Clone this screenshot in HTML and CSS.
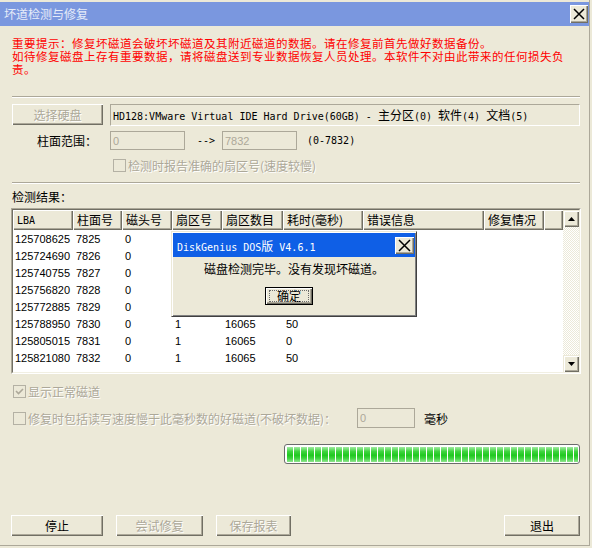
FILE: index.html
```html
<!DOCTYPE html>
<html lang="zh-CN">
<head>
<meta charset="utf-8">
<title>坏道检测与修复</title>
<link rel="stylesheet" href="styles.css">
</head>
<body>
<div class="window">
  <div class="titlebar">
    <span class="titlebar-text">坏道检测与修复</span>
    <span class="close-btn"><svg viewBox="0 0 18 18" width="18" height="18"><path d="M4 4 L14 14 M14 4 L4 14" stroke="#000" stroke-width="1.5"/></svg></span>
  </div>

  <div class="content">
    <p class="warning">重要提示：修复坏磁道会破坏坏磁道及其附近磁道的数据。请在修复前首先做好数据备份。<br>如待修复磁盘上存有重要数据，请将磁盘送到专业数据恢复人员处理。本软件不对由此带来的任何损失负责。</p>
    <div class="etched"></div>

    <div class="disk-row">
      <button class="btn btn-select" disabled>选择硬盘</button>
      <div class="disk-info mono">HD128:VMware Virtual IDE Hard Drive(60GB) - <span class="cjk">主分区</span>(0) <span class="cjk">软件</span>(4) <span class="cjk">文档</span>(5)</div>
    </div>

    <div class="range-row">
      <span class="range-label">柱面范围：</span>
      <input class="field" type="text" value="0" disabled>
      <span class="arrow mono">--&gt;</span>
      <input class="field" type="text" value="7832" disabled>
      <span class="range-hint mono">(0-7832)</span>
    </div>

    <div class="opt-row opt-exact">
      <span class="checkbox"></span>
      <span class="disabled-text">检测时报告准确的扇区号(速度较慢)</span>
    </div>

    <div class="etched sep2"></div>

    <div class="section-label">检测结果：</div>

    <div class="list">
      <div class="list-inner">
        <table class="grid">
          <colgroup>
            <col style="width:60px"><col style="width:49px"><col style="width:50px"><col style="width:50px"><col style="width:61px"><col style="width:80px"><col style="width:121px"><col style="width:60px"><col style="width:19px">
          </colgroup>
          <thead>
            <tr><th><span class="mono">LBA</span></th><th>柱面号</th><th>磁头号</th><th>扇区号</th><th>扇区数目</th><th>耗时(毫秒)</th><th>错误信息</th><th>修复情况</th><th></th></tr>
          </thead>
          <tbody>
            <tr><td class="lba">125708625</td><td>7825</td><td>0</td><td></td><td></td><td></td><td></td><td></td><td></td></tr>
            <tr><td class="lba">125724690</td><td>7826</td><td>0</td><td></td><td></td><td></td><td></td><td></td><td></td></tr>
            <tr><td class="lba">125740755</td><td>7827</td><td>0</td><td></td><td></td><td></td><td></td><td></td><td></td></tr>
            <tr><td class="lba">125756820</td><td>7828</td><td>0</td><td></td><td></td><td></td><td></td><td></td><td></td></tr>
            <tr><td class="lba">125772885</td><td>7829</td><td>0</td><td></td><td></td><td></td><td></td><td></td><td></td></tr>
            <tr><td class="lba">125788950</td><td>7830</td><td>0</td><td>1</td><td>16065</td><td>50</td><td></td><td></td><td></td></tr>
            <tr><td class="lba">125805015</td><td>7831</td><td>0</td><td>1</td><td>16065</td><td>0</td><td></td><td></td><td></td></tr>
            <tr><td class="lba">125821080</td><td>7832</td><td>0</td><td>1</td><td>16065</td><td>50</td><td></td><td></td><td></td></tr>
          </tbody>
        </table>
        <div class="scrollbar">
          <span class="sb-btn"><svg viewBox="0 0 7 4" width="7" height="4"><path d="M0 4 L3.5 0 L7 4 Z" fill="#000"/></svg></span>
          <span class="sb-track"></span>
          <span class="sb-btn"><svg viewBox="0 0 7 4" width="7" height="4"><path d="M0 0 L7 0 L3.5 4 Z" fill="#000"/></svg></span>
        </div>
      </div>
    </div>

    <div class="opt-row opt-normal">
      <span class="checkbox checked"><svg viewBox="0 0 11 11" width="11" height="11"><path d="M2 5 L4.5 7.5 L9 3" fill="none" stroke="#aca899" stroke-width="1.6"/></svg></span>
      <span class="disabled-text">显示正常磁道</span>
    </div>

    <div class="slow-row">
      <div class="opt-row opt-slow">
        <span class="checkbox"></span>
        <span class="disabled-text">修复时包括读写速度慢于此毫秒数的好磁道(不破坏数据)：</span>
      </div>
      <input class="field field-ms" type="text" value="0" disabled>
      <span class="unit">毫秒</span>
    </div>

    <div class="progress-row">
      <div class="progress"><div class="progress-fill"></div></div>
    </div>

    <div class="actions">
      <button class="btn btn-stop">停止</button>
      <button class="btn btn-try" disabled>尝试修复</button>
      <button class="btn btn-save" disabled>保存报表</button>
      <button class="btn btn-exit">退出</button>
    </div>
  </div>

  <div class="dialog">
    <div class="dlg-title">
      <span class="mono">DiskGenius DOS<span class="cjk">版</span> V4.6.1</span>
      <span class="dlg-close"><svg viewBox="0 0 19 17" width="19" height="17"><path d="M4 3 L15 14 M15 3 L4 14" stroke="#000" stroke-width="1.5"/></svg></span>
    </div>
    <div class="dlg-msg">磁盘检测完毕。没有发现坏磁道。</div>
    <div class="dlg-actions"><button class="btn dlg-ok">确定</button></div>
  </div>
</div>
</body>
</html>
```

FILE: styles.css
```css
* { box-sizing: border-box; }

html, body {
  margin: 0;
  padding: 0;
}

body {
  background: #ece9d8;
  font-family: "Noto Sans CJK SC", "Noto Sans", sans-serif;
  font-size: 12px;
  color: #000;
}

.mono {
  font-family: "DejaVu Sans Mono", "Noto Sans CJK SC", monospace;
  font-size: 10px;
}

.cjk {
  font-family: "Noto Sans CJK SC", sans-serif;
  font-size: 12px;
}

/* window frame */
.window {
  position: relative;
  width: 590px;
  height: 546px;
  padding-top: 2px;
  border-right: 1px solid #aca899;
  border-bottom: 1px solid #aca899;
}

.titlebar {
  display: flex;
  align-items: center;
  justify-content: space-between;
  height: 24px;
  padding: 0 1px 0 4px;
  background: #7a97df;
}

.titlebar-text {
  color: #e6ecf9;
  line-height: 24px;
}

.close-btn {
  display: flex;
  width: 18px;
  height: 18px;
  background: #ece9d8;
  box-shadow: inset 1px 1px #fff, inset -1px -1px #716f64, inset -2px -2px #aca899;
}

.content {
  padding: 0 9px 0 12px;
}

/* tightly spaced red notice; 11.5px glyphs + 0.5px tracking keep a 12px advance */
.warning {
  margin: 12px 0 0;
  width: 556px;
  height: 58px;
  color: #f00;
  font-family: "Liberation Sans", "Noto Sans CJK SC", sans-serif;
  font-size: 11.5px;
  letter-spacing: 0.5px;
  line-height: 13px;
}

.etched {
  height: 2px;
  border-top: 1px solid #aca899;
  border-bottom: 1px solid #fff;
}

.sep2 {
  margin-top: 10px;
}

/* push buttons */
.btn {
  height: 21px;
  padding: 0;
  border: none;
  background: #ece9d8;
  box-shadow: inset 1px 1px #fff, inset -1px -1px #716f64, inset -2px -2px #aca899;
  font: inherit;
  color: #000;
}

.btn:disabled {
  color: #aca899;
  text-shadow: 1px 1px #fff;
}

.disk-row {
  display: flex;
  align-items: flex-start;
  gap: 7px;
  margin-top: 6px;
}

.btn-select {
  width: 91px;
}

.disk-info {
  flex: 1;
  height: 22px;
  padding-left: 2px;
  line-height: 20px;
  white-space: nowrap;
  border-top: 1px solid #aca899;
  border-left: 1px solid #aca899;
  border-right: 1px solid #fff;
  border-bottom: 1px solid #fff;
}

.range-row {
  display: flex;
  align-items: center;
  height: 19px;
  margin-top: 5px;
}

.range-label {
  width: 73px;
  margin-left: 25px;
}

.field {
  width: 75px;
  height: 19px;
  margin: 0;
  padding: 0 2px;
  border: 1px solid #aca899;
  background: #ece9d8;
  color: #aca899;
  font: 11px "Liberation Sans", sans-serif;
}

.arrow {
  width: 25px;
  margin-left: 12px;
}

.range-hint {
  margin-left: 10px;
}

/* check boxes */
.opt-row {
  display: flex;
  align-items: center;
  height: 14px;
}

.opt-exact {
  margin: 8px 0 0 101px;
}

.checkbox {
  display: flex;
  align-items: center;
  justify-content: center;
  width: 13px;
  height: 13px;
  margin-right: 2px;
  border: 1px solid #b4b1a4;
}

.disabled-text {
  color: #aca899;
  text-shadow: 1px 1px #fff;
}

.section-label {
  margin-top: 5px;
  line-height: 16px;
}

/* result list */
.list {
  width: 570px;
  height: 166px;
  margin: 3px 0 0 -1px;
  border: 1px solid;
  border-color: #aca899 #fff #fff #aca899;
}

.list-inner {
  display: flex;
  height: 100%;
  border: 1px solid;
  border-color: #716f64 #f1efe2 #f1efe2 #716f64;
  background: #fff;
}

.grid {
  width: 550px;
  table-layout: fixed;
  border-collapse: separate;
  border-spacing: 0;
  align-self: flex-start;
}

.grid th {
  height: 18px;
  padding: 0 0 0 4px;
  background: #ece9d8;
  box-shadow: inset 1px 1px #fff, inset -1px -1px #716f64, inset -2px -2px #aca899;
  font-weight: normal;
  text-align: left;
  white-space: nowrap;
  overflow: hidden;
  line-height: 18px;
}

.grid td {
  height: 17px;
  padding: 0 0 0 3px;
  font: 11px "Liberation Sans", sans-serif;
  white-space: nowrap;
  overflow: hidden;
}

.grid td.lba {
  padding-left: 2px;
}

.scrollbar {
  display: flex;
  flex-direction: column;
  width: 16px;
}

.sb-btn {
  display: flex;
  align-items: center;
  justify-content: center;
  height: 17px;
  background: #ece9d8;
  box-shadow: inset 1px 1px #ece9d8, inset 2px 2px #fff, inset -1px -1px #716f64, inset -2px -2px #aca899;
}

.sb-track {
  flex: 1;
  background-color: #ece9d8;
  background-image: conic-gradient(#fff 25%, #ece9d8 0 50%, #fff 0 75%, #ece9d8 0);
  background-size: 2px 2px;
}

.opt-normal {
  margin: 10px 0 0 1px;
}

.slow-row {
  display: flex;
  align-items: center;
  height: 20px;
  margin-top: 10px;
}

.opt-slow {
  width: 344px;
  margin-left: 1px;
}

.field-ms {
  width: 58px;
  height: 20px;
}

.unit {
  margin-left: 9px;
}

/* progress */
.progress-row {
  display: flex;
  justify-content: flex-end;
  margin-top: 16px;
}

.progress {
  width: 296px;
  height: 20px;
  padding: 2px 1px 1px 2px;
  border: 1px solid #6b6b6b;
  border-radius: 3px;
  background: #fff;
}

.progress-fill {
  height: 100%;
  background:
    repeating-linear-gradient(90deg, transparent 0 6px, #fff 6px 7px),
    linear-gradient(#a3eba3, #3fd43f 30%, #1fc91f 55%, #3fd43f 75%, #8fe58f);
}

/* bottom buttons */
.actions {
  display: flex;
  margin-top: 51px;
}

.btn-stop { width: 92px; margin-left: -1px; }
.btn-try { width: 87px; margin-left: 13px; }
.btn-save { width: 75px; margin-left: 13px; }
.btn-exit { width: 76px; margin-left: auto; }

/* message box floating over the list */
.dialog {
  position: absolute;
  left: 171px;
  top: 231px;
  width: 246px;
  height: 86px;
  padding: 1px;
  border: 1px solid;
  border-color: #ece9d8 #404040 #404040 #ece9d8;
  background: #ece9d8;
  box-shadow: inset 1px 1px #fff, inset -1px -1px #808080;
}

.dlg-title {
  display: flex;
  align-items: center;
  justify-content: space-between;
  height: 24px;
  padding: 0 1px 0 4px;
  background: #0f5fe6;
  color: #fff;
}

.dlg-close {
  display: flex;
  width: 19px;
  height: 17px;
  background: #ece9d8;
  box-shadow: inset 1px 1px #fff, inset -1px -1px #716f64, inset -2px -2px #aca899;
}

.dlg-msg {
  margin-top: 5px;
  line-height: 14px;
  text-align: center;
}

.dlg-actions {
  margin-top: 11px;
  padding-left: 92px;
}

.dlg-ok {
  position: relative;
  width: 48px;
  height: 18px;
  border: 1px solid #000;
  line-height: 14px;
}

.dlg-ok::after {
  content: "";
  position: absolute;
  inset: 2px 3px;
  border: 1px dotted #6b6b6b;
}
```
